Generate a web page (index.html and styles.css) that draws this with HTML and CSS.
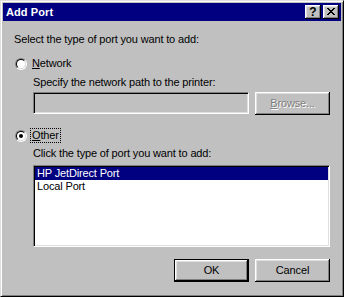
FILE: index.html
```html
<!DOCTYPE html>
<html lang="en">
<head>
  <meta charset="UTF-8">
  <title>Add Port</title>
  <link rel="stylesheet" href="styles.css">
</head>
<body>
  <div class="window">
    <div class="titlebar">
      <span class="title">Add Port</span>
      <div class="caption-buttons">
        <button class="cap-btn help">?</button>
        <button class="cap-btn close">
          <svg width="8" height="7" viewBox="0 0 8 7" shape-rendering="crispEdges">
            <path fill="#000" d="M0 0h2v1H0z M6 0h2v1H6z M1 1h2v1H1z M5 1h2v1H5z M2 2h4v1H2z M3 3h2v1H3z M2 4h4v1H2z M1 5h2v1H1z M5 5h2v1H5z M0 6h2v1H0z M6 6h2v1H6z"/>
          </svg>
        </button>
      </div>
    </div>

    <div class="content">
      <p class="label">Select the type of port you want to add:</p>

      <div class="option option-network">
        <span class="radio"></span>
        <span class="option-text"><u>N</u>etwork</span>
      </div>
      <div class="indent">
        <p class="label label-specify">Specify the network path to the printer:</p>
        <div class="path-row">
          <div class="field disabled"></div>
          <button class="btn" disabled><span class="btn-text"><u>B</u>rowse...</span></button>
        </div>
      </div>

      <div class="option option-other">
        <span class="radio checked"></span>
        <span class="option-text focus"><u>O</u>ther</span>
      </div>
      <div class="indent">
        <p class="label label-click">Click the type of port you want to add:</p>
        <ul class="listbox">
          <li class="selected">HP JetDirect Port</li>
          <li>Local Port</li>
        </ul>
      </div>

      <div class="actions">
        <button class="btn default"><span class="btn-text">OK</span></button>
        <button class="btn"><span class="btn-text">Cancel</span></button>
      </div>
    </div>
  </div>
</body>
</html>
```

FILE: styles.css
```css
body {
  margin: 0;
  font-family: "Liberation Sans", Arial, sans-serif;
  font-size: 11px;
  line-height: 13px;
  letter-spacing: -0.15px;
  color: #000;
  background: #c0c0c0;
}
p {
  margin: 0;
}
.window {
  width: 344px;
  height: 297px;
  box-sizing: border-box;
  background: #c0c0c0;
  border: 1px solid;
  border-color: #dfdfdf #000 #000 #dfdfdf;
  box-shadow: inset 1px 1px #fff, inset -1px -1px #808080;
  padding: 2px;
}
.titlebar {
  height: 18px;
  background: #000080;
  color: #fff;
  display: flex;
  align-items: center;
}
.title {
  font-weight: bold;
  line-height: 18px;
  padding-left: 3px;
  letter-spacing: 0.1px;
}
.caption-buttons {
  margin-left: auto;
  display: flex;
  gap: 2px;
  padding-right: 2px;
}
.cap-btn {
  width: 16px;
  height: 14px;
  padding: 0;
  border: 0;
  background: #c0c0c0;
  box-shadow: inset -1px -1px #000, inset 1px 1px #fff, inset -2px -2px #808080, inset 2px 2px #dfdfdf;
  display: flex;
  align-items: center;
  justify-content: center;
  font-family: "Liberation Sans", Arial, sans-serif;
  font-weight: bold;
  font-size: 12px;
  line-height: 14px;
  color: #000;
}
.cap-btn.help {
  padding-bottom: 1px;
}
.cap-btn.close svg {
  display: block;
  margin-bottom: 1px;
}
.content {
  padding: 12px 11px 0 11px;
}
.option {
  display: flex;
  align-items: center;
  height: 15px;
}
.option-network {
  margin-top: 10px;
}
.option-other {
  margin-top: 13px;
}
.radio {
  width: 12px;
  height: 12px;
  box-sizing: border-box;
  border-radius: 50%;
  border: 1px solid;
  border-color: #808080 #fff #fff #808080;
  margin-left: 1px;
  margin-right: 3px;
  position: relative;
}
.radio::before {
  content: "";
  position: absolute;
  inset: 0;
  border-radius: 50%;
  border: 1px solid;
  border-color: #000 #dfdfdf #dfdfdf #000;
  background: #fff;
}
.radio.checked::after {
  content: "";
  position: absolute;
  left: 3px;
  top: 3px;
  width: 4px;
  height: 4px;
  border-radius: 50%;
  background: #000;
}
.option-text {
  border: 1px solid transparent;
  padding: 0 1px;
  line-height: 13px;
}
.option-text.focus {
  border: 1px dotted #000;
}
.indent {
  margin-left: 19px;
}
.label-specify {
  margin-top: 5px;
}
.label-click {
  margin-top: 4px;
}
.path-row {
  margin-top: 3px;
  display: flex;
  gap: 6px;
  align-items: flex-start;
}
.field {
  flex: 1;
  height: 22px;
  box-sizing: border-box;
  border: 1px solid;
  border-color: #808080 #fff #fff #808080;
  box-shadow: inset 1px 1px #000, inset -1px -1px #dfdfdf;
  background: #fff;
}
.field.disabled {
  background: #c0c0c0;
}
.btn {
  width: 75px;
  height: 23px;
  padding: 0 0 1px;
  border: 0;
  box-sizing: border-box;
  background: #c0c0c0;
  box-shadow: inset -1px -1px #000, inset 1px 1px #fff, inset -2px -2px #808080, inset 2px 2px #dfdfdf;
  font: inherit;
  letter-spacing: inherit;
  color: #000;
  display: flex;
  align-items: center;
  justify-content: center;
}
.btn.default {
  border: 1px solid #000;
}
.btn:disabled {
  color: #808080;
  text-shadow: 1px 1px #fff;
}
.listbox {
  list-style: none;
  margin: 5px 0 0;
  height: 82px;
  box-sizing: border-box;
  padding: 1px;
  border: 1px solid;
  border-color: #808080 #fff #fff #808080;
  box-shadow: inset 1px 1px #000, inset -1px -1px #dfdfdf;
  background: #fff;
}
.listbox li {
  line-height: 13px;
  padding-left: 2px;
}
.listbox li.selected {
  background: #000080;
  color: #fff;
}
.actions {
  margin-top: 12px;
  display: flex;
  justify-content: flex-end;
  gap: 6px;
}
```
